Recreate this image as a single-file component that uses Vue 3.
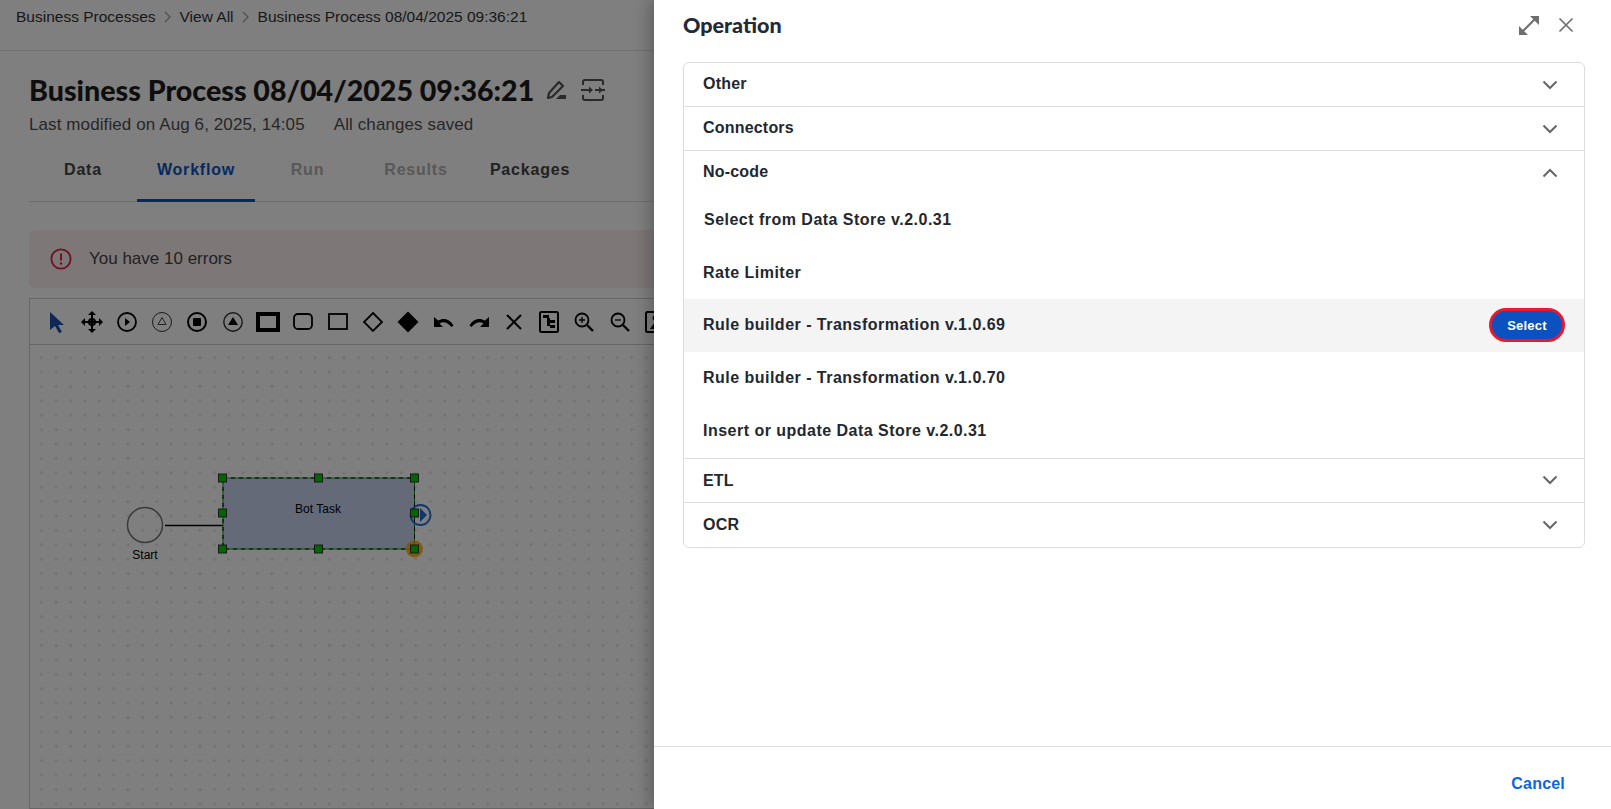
<script setup>
const tabs = [
  { label: 'Data', cls: 'tab-data' },
  { label: 'Workflow', cls: 'tab-active' },
  { label: 'Run', cls: 'tab-off' },
  { label: 'Results', cls: 'tab-off' },
  { label: 'Packages', cls: '' },
]
const items = [
  { label: 'Select from Data Store v.2.0.31', indent: true },
  { label: 'Rate Limiter' },
  { label: 'Rule builder - Transformation v.1.0.69', active: true },
  { label: 'Rule builder - Transformation v.1.0.70' },
  { label: 'Insert or update Data Store v.2.0.31' },
]
const handles = [
  [222.5, 478], [318.5, 478], [414.5, 478],
  [222.5, 513], [414.5, 513],
  [222.5, 549], [318.5, 549], [414.5, 549],
]
</script>

<template>
  <div class="root">
    <div class="page">
      <nav class="crumbs">
        <span>Business Processes</span>
        <svg class="sep" width="10" height="14" viewBox="0 0 10 14"><path d="M2 2l5 5-5 5" fill="none" stroke="#a0a0a0" stroke-width="1.3"/></svg>
        <span>View All</span>
        <svg class="sep" width="10" height="14" viewBox="0 0 10 14"><path d="M2 2l5 5-5 5" fill="none" stroke="#a0a0a0" stroke-width="1.3"/></svg>
        <span>Business Process 08/04/2025 09:36:21</span>
      </nav>
      <main class="body">
        <div class="title-row">
          <h1>Business Process 08/04/2025 09:36:21</h1>
          <svg class="edit" width="24" height="24" viewBox="0 0 24 24"><path d="M4 20l1-5L15 4l4 4L8 19z" fill="none" stroke="#555" stroke-width="2.200" stroke-linejoin="round"/><path d="M12 21h10v-4h-6z" fill="#555"/></svg>
          <svg class="merge" width="26" height="26" viewBox="0 0 26 26" fill="none" stroke="#555" stroke-width="2"><path d="M3 8V5a2 2 0 0 1 2-2h16a2 2 0 0 1 2 2v3M3 18v3a2 2 0 0 0 2 2h16a2 2 0 0 0 2-2v-3M1 13h10M15 13h10"/><path d="M9 9.500l4 3.500-4 3.500zM19 9.500l4 3.500-4 3.500z" fill="#555" stroke="none"/></svg>
        </div>
        <div class="meta"><span>Last modified on Aug 6, 2025, 14:05</span><span>All changes saved</span></div>
        <div class="tabs">
          <span v-for="t in tabs" :key="t.label" class="tab" :class="t.cls">{{ t.label }}</span>
        </div>
        <div class="banner">
          <svg width="22" height="22" viewBox="0 0 22 22"><circle cx="11" cy="11" r="9.600" fill="none" stroke="#dc2444" stroke-width="1.800"/><path d="M11 5.500v7" stroke="#dc2444" stroke-width="2"/><circle cx="11" cy="15.500" r="1.200" fill="#dc2444"/></svg>
          <span>You have 10 errors</span>
        </div>
        <section class="editor">
          <div class="toolbar">
            <span class="tool"><svg width="22" height="24" viewBox="0 0 22 24"><path d="M4 2l14 13h-6l4 7-3 1-4-7-5 4z" fill="#1d4fa8"/></svg></span>
            <span class="tool"><svg width="24" height="24" viewBox="0 0 24 24"><path d="M12 1l4 4h-8zM12 23l-4-4h8zM1 12l4-4v8zM23 12l-4 4V8z"/><path d="M12 5v14M5 12h14" stroke="#000" stroke-width="2"/><circle cx="12" cy="12" r="3" fill="none" stroke="#000" stroke-width="2"/></svg></span>
            <span class="tool"><svg width="22" height="22" viewBox="0 0 22 22"><circle cx="11" cy="11" r="9" fill="none" stroke="#000" stroke-width="1.800"/><path d="M9 7l5 4-5 4z"/></svg></span>
            <span class="tool"><svg width="22" height="22" viewBox="0 0 22 22"><circle cx="11" cy="11" r="9.500" fill="none" stroke="#333" stroke-width="1"/><path d="M11 6.500l4 7H7z" fill="none" stroke="#444" stroke-width="1"/></svg></span>
            <span class="tool"><svg width="22" height="22" viewBox="0 0 22 22"><circle cx="11" cy="11" r="9" fill="none" stroke="#000" stroke-width="2"/><rect x="7" y="7" width="8" height="8" rx="1"/></svg></span>
            <span class="tool"><svg width="22" height="22" viewBox="0 0 22 22"><circle cx="11" cy="11" r="9.200" fill="none" stroke="#333" stroke-width="1.400"/><path d="M11 6l5 8H6z"/></svg></span>
            <span class="tool"><svg width="24" height="20" viewBox="0 0 24 20"><rect x="2" y="2" width="20" height="16" fill="none" stroke="#000" stroke-width="4"/></svg></span>
            <span class="tool"><svg width="22" height="20" viewBox="0 0 22 20"><rect x="2" y="2" width="18" height="15" rx="4" fill="none" stroke="#000" stroke-width="1.800"/></svg></span>
            <span class="tool"><svg width="22" height="20" viewBox="0 0 22 20"><rect x="2" y="2" width="18" height="15" fill="none" stroke="#000" stroke-width="1.800"/></svg></span>
            <span class="tool"><svg width="24" height="24" viewBox="0 0 24 24"><path d="M12 3l9 9-9 9-9-9z" fill="none" stroke="#000" stroke-width="1.800"/></svg></span>
            <span class="tool"><svg width="24" height="24" viewBox="0 0 24 24"><path d="M12 1.500l10.500 10.500L12 22.500 1.500 12z"/></svg></span>
            <span class="tool"><svg width="24" height="20" viewBox="0 0 24 20"><path d="M2 5v10h9l-3.500-3.500c3.500-2.500 8-1.500 12 3.500l2-1.500c-3-6-9.500-8.500-15.500-5z"/></svg></span>
            <span class="tool"><svg width="24" height="20" viewBox="0 0 24 20"><path d="M22 5v10h-9l3.500-3.500c-3.500-2.500-8-1.500-12 3.500l-2-1.500c3-6 9.500-8.500 15.500-5z"/></svg></span>
            <span class="tool"><svg width="20" height="20" viewBox="0 0 20 20"><path d="M3 3l14 14M17 3L3 17" stroke="#000" stroke-width="2"/></svg></span>
            <span class="tool"><svg width="22" height="24" viewBox="0 0 22 24"><rect x="2" y="2" width="18" height="20" rx="1.500" fill="none" stroke="#000" stroke-width="2"/><path d="M5 5h6v3H5zM9 8h3v8H9zM12 10h5v3h-5zM12 15h5v3h-5z"/></svg></span>
            <span class="tool"><svg width="22" height="22" viewBox="0 0 22 22" fill="none" stroke="#000"><circle cx="9" cy="9" r="6.500" stroke-width="1.800"/><path d="M14 14l6 6" stroke-width="2.400"/><path d="M9 6v6M6 9h6" stroke-width="1.300"/></svg></span>
            <span class="tool"><svg width="22" height="22" viewBox="0 0 22 22" fill="none" stroke="#000"><circle cx="9" cy="9" r="6.500" stroke-width="1.800"/><path d="M14 14l6 6" stroke-width="2.400"/><path d="M6 9h6" stroke-width="1.300"/></svg></span>
            <span class="tool"><svg width="22" height="24" viewBox="0 0 22 24"><rect x="2" y="2" width="18" height="20" rx="1.500" fill="none" stroke="#000" stroke-width="2"/><circle cx="11" cy="8" r="2.500"/><path d="M11 12l5 7H6z"/></svg></span>
          </div>
          <div class="canvas"></div>
        </section>
      </main>
      <svg class="diagram" width="654" height="809" viewBox="0 0 654 809">
        <circle cx="145" cy="525" r="17.500" fill="none" stroke="#777" stroke-width="1.500"/>
        <path d="M165 525.500h58" stroke="#000" stroke-width="1.300"/>
        <text x="145" y="559" class="dt" text-anchor="middle">Start</text>
        <rect x="223" y="478" width="191.500" height="71" fill="#c9d5f0"/>
        <rect x="223" y="478" width="191.500" height="71" fill="none" stroke="#00a000" stroke-width="1"/>
        <rect x="223" y="478" width="191.500" height="71" fill="none" stroke="#000" stroke-width="1" stroke-dasharray="4 4"/>
        <text x="318" y="513" class="dt" text-anchor="middle">Bot Task</text>
        <circle cx="420.500" cy="515" r="10" fill="none" stroke="#1c6fe0" stroke-width="1.800"/>
        <path d="M420 508l7 7-7 7z" fill="#1c6fe0"/>
        <circle cx="414.500" cy="549" r="8.500" fill="#ffa500" fill-opacity=".8"/>
        <rect v-for="h in handles" :key="h[0] + '-' + h[1]" :x="h[0] - 4" :y="h[1] - 4" width="8" height="8" fill="#00cc00" stroke="#333" stroke-width="1"/>
      </svg>
    </div>

    <div class="overlay"></div>

    <aside class="drawer">
      <header class="drawer-head">
        <h2>Operation</h2>
        <div class="head-icons">
          <svg width="22" height="22" viewBox="0 0 22 22"><path d="M3 19L19 3" stroke="#6f6f6f" stroke-width="2"/><path d="M12 2h9v9zM1 12v9h9z" fill="#6f6f6f"/></svg>
          <svg width="16" height="16" viewBox="0 0 16 16"><path d="M1.500 1.500l13 13M14.500 1.500l-13 13" stroke="#6f6f6f" stroke-width="1.700"/></svg>
        </div>
      </header>
      <div class="accordion">
        <div class="acc-row up"><span>Other</span><svg class="chev" width="16" height="10" viewBox="0 0 16 10"><path d="M1.500 1.500L8 8l6.500-6.500" fill="none" stroke="#666" stroke-width="2"/></svg></div>
        <div class="acc-row up"><span>Connectors</span><svg class="chev" width="16" height="10" viewBox="0 0 16 10"><path d="M1.500 1.500L8 8l6.500-6.500" fill="none" stroke="#666" stroke-width="2"/></svg></div>
        <div class="acc-row up open"><span>No-code</span><svg class="chev" width="16" height="10" viewBox="0 0 16 10"><path d="M1.500 8.500L8 2l6.500 6.500" fill="none" stroke="#666" stroke-width="2"/></svg></div>
        <div class="acc-items">
          <div v-for="it in items" :key="it.label" class="acc-item" :class="{ active: it.active, indent: it.indent }">
            <span>{{ it.label }}</span>
            <button v-if="it.active" class="select">Select</button>
          </div>
        </div>
        <div class="acc-row etl"><span>ETL</span><svg class="chev" width="16" height="10" viewBox="0 0 16 10"><path d="M1.500 1.500L8 8l6.500-6.500" fill="none" stroke="#666" stroke-width="2"/></svg></div>
        <div class="acc-row last"><span>OCR</span><svg class="chev" width="16" height="10" viewBox="0 0 16 10"><path d="M1.500 1.500L8 8l6.500-6.500" fill="none" stroke="#666" stroke-width="2"/></svg></div>
      </div>
      <footer class="drawer-foot"><span class="cancel">Cancel</span></footer>
    </aside>
  </div>
</template>

<style>
html, body { margin: 0; overflow: hidden; }
</style>

<style scoped>
.root { position: relative; width: 1611px; height: 809px; overflow: hidden; background: #fff; font-family: "Liberation Sans", sans-serif; }
.page { height: 809px; display: flex; flex-direction: column; }
.crumbs { height: 51px; flex: none; box-sizing: border-box; padding: 8px 0 0 16px; display: flex; align-items: flex-start; gap: 7px; border-bottom: 1px solid #e0e0e0; font-size: 15.500px; line-height: 18px; color: #333; }
.sep { margin-top: 2px; }
.body { flex: 1; padding: 0 0 0 29px; display: flex; flex-direction: column; min-height: 0; }
.title-row { margin-top: 22px; height: 34px; display: flex; align-items: center; }
h1 { margin: 0; font: 900 28.600px/34px Lato, sans-serif; color: #1d1d1d; white-space: nowrap; }
.edit { margin-left: 10px; }
.merge { margin-left: 12px; }
.meta { margin-top: 8px; display: flex; gap: 29px; font-size: 17px; line-height: 20px; letter-spacing: .1px; color: #4f4f4f; }
.tabs { margin-top: 18px; height: 48px; flex: none; display: flex; border-bottom: 1px solid #ddd; font-weight: 700; font-size: 16px; letter-spacing: .8px; }
.tab { box-sizing: border-box; height: 49px; padding: 8px 0 0; color: #444; text-align: center; }
.tab:nth-child(1) { width: 108px; }
.tab:nth-child(2) { width: 118px; }
.tab:nth-child(3) { width: 105px; }
.tab:nth-child(4) { width: 112px; }
.tab:nth-child(5) { width: 116px; }
.tab-active { color: #0b52c0; border-bottom: 3px solid #0b52c0; }
.tab-off { color: #b0b0b0; }
.banner { margin-top: 28px; height: 58px; flex: none; background: #fbeef0; border-radius: 6px 0 0 6px; display: flex; align-items: center; gap: 17px; padding-left: 21px; font-size: 17px; color: #444; }
.editor { margin-top: 10px; flex: 1; border: 1px solid #ccc; border-right: 0; display: flex; flex-direction: column; min-height: 0; }
.toolbar { height: 45px; flex: none; border-bottom: 1px solid #ccc; padding-left: 9px; display: flex; align-items: center; }
.tool { width: 35.200px; flex: none; display: flex; justify-content: center; align-items: center; }
.tool svg { display: block; }
.canvas { flex: 1; background-image: radial-gradient(circle, #e4e4e4 1.200px, transparent 1.600px); background-size: 14.400px 14.400px; background-position: 4.500px 5.500px; }
.diagram { position: absolute; left: 0; top: 0; }
.dt { font: 12px "Liberation Sans", sans-serif; fill: #000; }
.overlay { position: absolute; inset: 0; background: rgba(0, 0, 0, .5); }
.drawer { position: absolute; left: 654px; top: 0; bottom: 0; width: 957px; background: #fff; box-shadow: -6px 0 14px rgba(0, 0, 0, .22); display: flex; flex-direction: column; font-family: "Liberation Sans", sans-serif; }
.drawer-head { height: 50px; flex: none; padding: 0 37px 0 29px; box-sizing: border-box; display: flex; align-items: center; justify-content: space-between; }
h2 { margin: 0; font: 900 21.500px/26px Lato, sans-serif; color: #232936; }
.head-icons { display: flex; align-items: center; gap: 18px; }
.accordion { margin: 12px 26px 0 29px; border: 1px solid #ddd; border-radius: 6px; color: #23272f; font-weight: 700; font-size: 16px; }
.acc-row { height: 43px; display: flex; align-items: center; justify-content: space-between; padding: 0 26px 0 19px; border-bottom: 1px solid #ddd; letter-spacing: .2px; }
.acc-row.up span { margin-bottom: 2px; }
.acc-row.etl span { margin-top: 1px; }
.acc-row.open { border-bottom: 0; }
.acc-row.last { border-bottom: 0; height: 44px; }
.acc-items { border-bottom: 1px solid #ddd; padding: 0 0 1px; }
.acc-item { height: 52.600px; box-sizing: border-box; display: flex; align-items: center; justify-content: space-between; padding: 0 19px 0 19px; letter-spacing: .48px; }
.acc-item.indent { padding-left: 20px; }
.acc-item.active { background: #f4f4f4; }
.select { width: 76px; height: 34px; box-sizing: border-box; border: 3px solid #e8192c; border-radius: 17px; background: #0b52c0; color: #fff; font: 700 13px "Liberation Sans", sans-serif; letter-spacing: .2px; padding: 0; }
.drawer-foot { margin-top: auto; height: 63px; flex: none; border-top: 1px solid #e0e0e0; display: flex; align-items: center; justify-content: flex-end; padding: 12px 46px 0 0; box-sizing: border-box; }
.cancel { color: #0b66e4; font-weight: 700; font-size: 16px; letter-spacing: .2px; }
</style>
